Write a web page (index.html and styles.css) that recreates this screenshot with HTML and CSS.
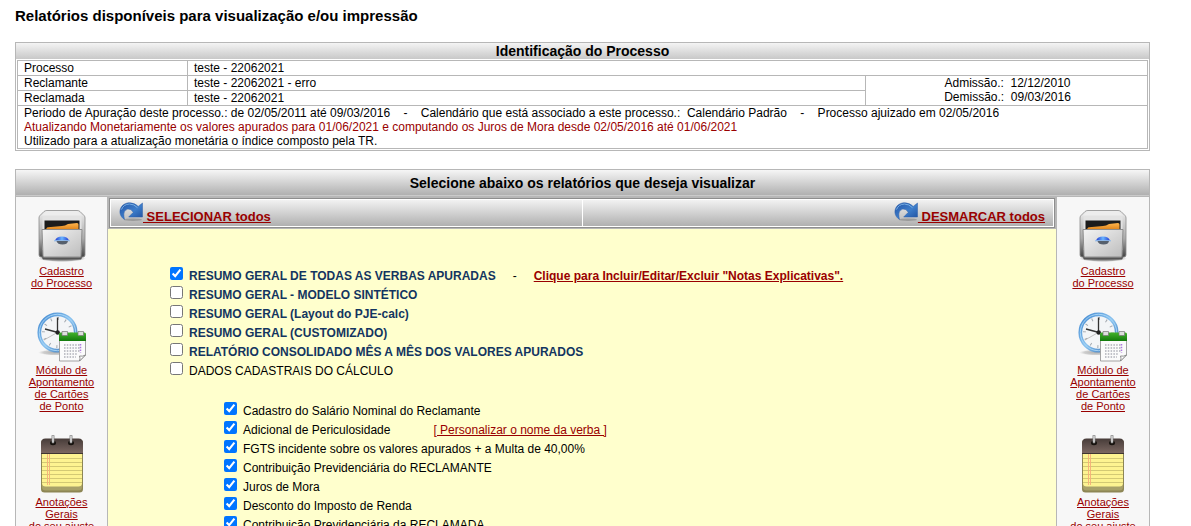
FILE: index.html
```html
<!DOCTYPE html>
<html lang="pt-BR">
<head>
<meta charset="utf-8">
<title>Relatórios</title>
<link rel="stylesheet" href="styles.css">
</head>
<body>
<svg class="defs" width="0" height="0" aria-hidden="true">
  <defs>
    <linearGradient id="steel" x1="0" y1="0" x2="1" y2="1"><stop offset="0" stop-color="#f4f4f4"/><stop offset="1" stop-color="#bcbcbc"/></linearGradient>
    <linearGradient id="side" x1="0" y1="0" x2="0" y2="1"><stop offset="0" stop-color="#eee"/><stop offset=".6" stop-color="#aaa"/><stop offset="1" stop-color="#444"/></linearGradient>
    <linearGradient id="folder" x1="0" y1="0" x2="0" y2="1"><stop offset="0" stop-color="#ffb54d"/><stop offset="1" stop-color="#d97a10"/></linearGradient>
    <linearGradient id="knob" x1="0" y1="0" x2="1" y2="0"><stop offset="0" stop-color="#2038d0"/><stop offset=".5" stop-color="#6ab4ff"/><stop offset="1" stop-color="#2038d0"/></linearGradient>
    <linearGradient id="ring" x1="0" y1="0" x2="1" y2="1"><stop offset="0" stop-color="#3f86cf"/><stop offset=".5" stop-color="#8cc4f0"/><stop offset="1" stop-color="#2a68b0"/></linearGradient>
    <linearGradient id="green" x1="0" y1="0" x2="0" y2="1"><stop offset="0" stop-color="#43b32c"/><stop offset="1" stop-color="#137a0c"/></linearGradient>
    <linearGradient id="leather" x1="0" y1="0" x2="0" y2="1"><stop offset="0" stop-color="#473c39"/><stop offset="1" stop-color="#7a6761"/></linearGradient>
    <linearGradient id="blue" x1="0" y1="0" x2="1" y2="1"><stop offset="0" stop-color="#2456a8"/><stop offset=".55" stop-color="#3d7dca"/><stop offset="1" stop-color="#1f4f9e"/></linearGradient>
    <radialGradient id="shade"><stop offset="0" stop-color="#333" stop-opacity=".75"/><stop offset=".7" stop-color="#555" stop-opacity=".5"/><stop offset="1" stop-color="#999" stop-opacity="0"/></radialGradient>
    <symbol id="cabinet" viewBox="0 0 50 54">
      <ellipse cx="25" cy="49.500" rx="24" ry="3.500" fill="url(#shade)"/>
      <path d="M4 47h42l-2 3.500H6z" fill="#555"/>
      <path d="M10 1.500h30q2 0 3.200 1.200l4 4q.8 1 .8 2.300v37q0 2-2 2H4q-2 0-2-2V9q0-1.300.8-2.300l4-4Q8 1.500 10 1.500z" fill="url(#side)" stroke="#8a8a8a" stroke-width=".8"/>
      <path d="M10 2h30l5.500 4.500h-41z" fill="#ededed"/>
      <path d="M5.500 7h39v34h-39z" fill="#e3e3e3"/>
      <path d="M7.500 11.500h35V23h-35z" fill="#1c1c1c"/>
      <path d="M9 21.500q0-3 2-3.200l14-1.300q3-.2 6-2l9-1q1.500 0 1.500 1.500V22H9z" fill="url(#folder)"/>
      <path d="M5 20.500h40l-1 26q0 1.500-1.500 1.500h-35Q6 48 6 46.500z" fill="url(#steel)" stroke="#8c8c8c"/>
      <path d="M18 31.500q1.500-4 7-4t7 4z" fill="url(#knob)"/>
      <path d="M17 31.300h16v1H17z" fill="#86b5e8"/>
      <path d="M19.500 32h11.500q-.5 3.500-5.500 3.500t-6-3.500z" fill="#56606d"/>
    </symbol>
    <symbol id="clock" viewBox="0 0 50 50">
      <ellipse cx="18" cy="40.500" rx="17" ry="3" fill="url(#shade)" opacity=".5"/>
      <circle cx="20.500" cy="20.500" r="18.200" fill="#f3f5f7" stroke="url(#ring)" stroke-width="3.700"/>
      <circle cx="20.500" cy="20.500" r="18.200" fill="none" stroke="#b5defa" stroke-width=".8"/>
      <circle cx="20.500" cy="20.500" r="14" fill="none" stroke="#a3a9af" stroke-width="3" stroke-dasharray="1 6.330"/>
      <path d="M20.500 20.500V5.500M21 20.500 8 17" stroke="#333" stroke-width="1.300"/>
      <path d="m7 28 15-8.500" stroke="#aaa" stroke-width=".7"/>
      <circle cx="20.700" cy="20.500" r="2.200" fill="#222"/>
      <path d="M22.500 23h26v20l-6 6h-20z" fill="#fbfbfb" stroke="#999" stroke-width=".9"/>
      <path d="M22 29v-7q0-1.500 1.500-1.500h24q1.500 0 1.500 1.500v7z" fill="url(#green)"/>
      <path d="M25 19.500h5.500v4H25zM41 19.500h5.500v4H41z" fill="#dedede" stroke="#777" stroke-width=".7"/>
      <path d="M27 33h16M27 36h16M27 39h16M27 42h13M27 45h12" stroke="#aeb0b8" stroke-width="1.400" stroke-dasharray="1.500 1.300"/>
      <path d="M43.500 32v9" stroke="#ad78e0" stroke-width="1.500" stroke-dasharray="1.500 1.300"/>
      <path d="M42.500 49q1-3 0-5 3 .7 6-1z" fill="#fff" stroke="#777" stroke-width=".8"/>
    </symbol>
    <symbol id="notes" viewBox="0 0 44 58">
      <path d="M1 8q0-3.500 3.500-3.500h35Q43 4.500 43 8v46q0 3.500-3.500 3.500h-35Q1 57.500 1 54z" fill="#8d8655"/>
      <path d="M2 47h40v5q0 3.500-3.500 3.500h-33Q2 55.500 2 52z" fill="#a8a169"/>
      <path d="M2 17h40v31q0 3.500-3.500 3.500h-33Q2 51.500 2 48z" fill="#fdf391"/>
      <path d="M2 23.500h40M2 27.500h40M2 31.500h40M2 35.500h40M2 39.500h40M2 43.500h40M2 47.500h40" stroke="#d3c974"/>
      <path d="M7.500 19v31M9.500 19v31" stroke="#f5ae78" stroke-width=".9"/>
      <path d="M1 18V8q0-4.500 4.500-4.500h33Q43 3.500 43 8v10z" fill="url(#leather)"/>
      <path d="M1 18.500h42" stroke="#3e3532" stroke-width="1.200"/>
      <path d="M10 8a3 2.200 0 1 0 6 0 3 2.200 0 1 0-6 0M28 8a3 2.200 0 1 0 6 0 3 2.200 0 1 0-6 0" fill="#17130f"/>
      <path d="M13 1v6M31 1v6" stroke="#777" stroke-width="2.800" stroke-linecap="round"/>
      <path d="M13 1v6M31 1v6" stroke="#eee" stroke-width="1.300" stroke-linecap="round"/>
    </symbol>
    <symbol id="turn" viewBox="0 0 24 20">
      <ellipse cx="14" cy="17.700" rx="9" ry="1.300" fill="#777" opacity=".5"/>
      <path d="M5.500 17.500C1.500 15 .2 10.800 1.300 7.300 2.600 3 6.500.7 11 .8q4.800.2 8.200 3.600L23.500 1v14H9.700l4.600-4.700Q12 6.500 8.700 7.100 5 8 4.800 12q0 3 .7 5.500z" fill="url(#blue)" stroke="#2d5fa9" stroke-width=".5"/>
      <path d="M2.500 7.500Q4.500 2.300 10.500 2q4.500 0 8 3.700" fill="none" stroke="#79afe3" stroke-width="1"/>
    </symbol>
  </defs>
</svg>

<h1 class="title">Relatórios disponíveis para visualização e/ou impressão</h1>

<section class="process">
  <h2 class="process-head">Identificação do Processo</h2>
  <div class="grid">
    <div class="cell">Processo</div><div class="cell wide">teste - 22062021</div>
    <div class="cell">Reclamante</div><div class="cell">teste - 22062021 - erro</div>
    <div class="cell dates">Admissão.:&nbsp; 12/12/2010<br>Demissão.:&nbsp; 09/03/2016</div>
    <div class="cell">Reclamada</div><div class="cell">teste - 22062021</div>
    <div class="cell full">Periodo de Apuração deste processo.: de 02/05/2011 até 09/03/2016 &nbsp;&nbsp; - &nbsp;&nbsp; Calendário que está associado a este processo.:&nbsp; Calendário Padrão &nbsp;&nbsp; - &nbsp;&nbsp; Processo ajuizado em 02/05/2016<br><span class="red">Atualizando Monetariamente os valores apurados para 01/06/2021 e computando os Juros de Mora desde 02/05/2016 até 01/06/2021</span><br>Utilizado para a atualização monetária o índice composto pela TR.</div>
  </div>
</section>

<section class="reports">
  <h2 class="reports-head">Selecione abaixo os relatórios que deseja visualizar</h2>
  <div class="columns">
    <nav class="side">
      <a class="tool"><svg class="i-cabinet"><use href="#cabinet"/></svg><span>Cadastro<br>do Processo</span></a>
      <a class="tool"><svg class="i-clock"><use href="#clock"/></svg><span>Módulo de<br>Apontamento<br>de Cartões<br>de Ponto</span></a>
      <a class="tool"><svg class="i-notes"><use href="#notes"/></svg><span>Anotações<br>Gerais<br>do seu ajuste</span></a>
    </nav>
    <main class="main">
      <div class="bar">
        <div class="bar-cell"><a class="bar-link"><svg class="i-turn"><use href="#turn"/></svg><span>&nbsp;SELECIONAR todos</span></a></div>
        <div class="bar-cell end"><a class="bar-link"><svg class="i-turn"><use href="#turn"/></svg><span>&nbsp;DESMARCAR todos</span></a></div>
      </div>
      <div class="list">
        <label class="row strong"><input type="checkbox" checked><span>RESUMO GERAL DE TODAS AS VERBAS APURADAS</span><i class="dash">-</i><a class="link">Clique para Incluir/Editar/Excluir "Notas Explicativas".</a></label>
        <label class="row strong"><input type="checkbox"><span>RESUMO GERAL - MODELO SINTÉTICO</span></label>
        <label class="row strong"><input type="checkbox"><span>RESUMO GERAL (Layout do PJE-calc)</span></label>
        <label class="row strong"><input type="checkbox"><span>RESUMO GERAL (CUSTOMIZADO)</span></label>
        <label class="row strong"><input type="checkbox"><span>RELATÓRIO CONSOLIDADO MÊS A MÊS DOS VALORES APURADOS</span></label>
        <label class="row"><input type="checkbox"><span>DADOS CADASTRAIS DO CÁLCULO</span></label>
        <div class="sub">
          <label class="row"><input type="checkbox" checked><span>Cadastro do Salário Nominal do Reclamante</span></label>
          <label class="row"><input type="checkbox" checked><span>Adicional de Periculosidade</span><a class="link rename">[ Personalizar o nome da verba ]</a></label>
          <label class="row"><input type="checkbox" checked><span>FGTS incidente sobre os valores apurados + a Multa de 40,00%</span></label>
          <label class="row"><input type="checkbox" checked><span>Contribuição Previdenciária do RECLAMANTE</span></label>
          <label class="row"><input type="checkbox" checked><span>Juros de Mora</span></label>
          <label class="row"><input type="checkbox" checked><span>Desconto do Imposto de Renda</span></label>
          <label class="row"><input type="checkbox" checked><span>Contribuição Previdenciária da RECLAMADA</span></label>
        </div>
      </div>
    </main>
    <nav class="side">
      <a class="tool"><svg class="i-cabinet"><use href="#cabinet"/></svg><span>Cadastro<br>do Processo</span></a>
      <a class="tool"><svg class="i-clock"><use href="#clock"/></svg><span>Módulo de<br>Apontamento<br>de Cartões<br>de Ponto</span></a>
      <a class="tool"><svg class="i-notes"><use href="#notes"/></svg><span>Anotações<br>Gerais<br>do seu ajuste</span></a>
    </nav>
  </div>
</section>
</body>
</html>
```
FILE: styles.css
```css
* { box-sizing: border-box; }
html, body { height: 526px; overflow: hidden; }
body {
  margin: 0;
  padding: 7px 41px 0 15px;
  background: #fff;
  color: #000;
  font: 12px/14px "Liberation Sans", Arial, sans-serif;
}
.defs { display: block; }
.title { margin: 0 0 18px; font-size: 15px; line-height: 17px; }

.process { width: 1135px; border: 1px solid #b7b7b7; padding-bottom: 1px; }
.process-head {
  height: 16px;
  margin: 0 0 1px;
  font-size: 14px;
  line-height: 16px;
  text-align: center;
  background: linear-gradient(#f4f4f4, #c8c8c8);
}
.grid {
  display: grid;
  grid-template-columns: 169px 677px 281px;
  grid-template-rows: 14px 14px 14px 42px;
  gap: 1px;
  width: 1131px;
  margin: 0 1px;
  border: 1px solid #b7b7b7;
  background: #b7b7b7;
}
.cell { padding-left: 6px; background: #fff; white-space: nowrap; }
.wide { grid-column: 2 / 4; }
.full { grid-column: 1 / 4; }
.dates { grid-column: 3; grid-row: 2 / 4; padding-left: 2px; text-align: center; }
.red { color: #900; }

.reports { width: 1135px; margin-top: 18px; border: 1px solid #b7b7b7; border-bottom: 0; }
.reports-head {
  height: 27px;
  margin: 0;
  border-bottom: 1px solid #b7b7b7;
  font-size: 14px;
  line-height: 26px;
  text-align: center;
  background: linear-gradient(#f6f6f6, #b0b0b0 25px, #cacaca 25px);
}
.columns { display: grid; grid-template-columns: 91px 950px 92px; height: 360px; }
.side { display: flex; flex-direction: column; gap: 23px; padding-top: 12px; background: #f7f7f7; }
.tool {
  display: flex;
  flex-direction: column;
  align-items: center;
  color: #900;
  font-size: 11px;
  line-height: 12px;
  text-align: center;
  text-decoration: underline;
}
.i-cabinet { width: 50px; height: 54px; margin-bottom: 2px; }
.i-clock { width: 50px; height: 50px; margin-bottom: 2px; }
.i-notes { width: 44px; height: 58px; margin-bottom: 3px; }

.main { border: 1px solid #b7b7b7; border-width: 0 1px; background: #ffffcd; }
.bar {
  display: flex;
  gap: 1px;
  height: 32px;
  padding: 1px;
  border: 1px solid #b7b7b7;
  border-bottom-color: #b7b7b7;
  background: #fff;
  box-shadow: inset 0 0 0 1px #8e8e8e;
}
.bar { padding: 2px; }
.bar-cell {
  display: flex;
  flex: 1;
  padding: 1px 8px 0;
  background: linear-gradient(#f2f2f2, #b0b0b0);
}
.end { justify-content: flex-end; }
.bar-link {
  display: flex;
  align-items: flex-start;
  color: #900;
  font-size: 13px;
  font-weight: bold;
  line-height: 15px;
  text-decoration: underline;
}
.bar-link span { margin-top: 8px; }
.i-turn { width: 24px; height: 20px; margin-top: 1px; }

.list { padding: 37px 0 0 62px; }
.row { display: flex; align-items: flex-start; height: 19px; white-space: nowrap; }
.row input { width: 13px; height: 13px; margin: 1px 6px 0 0; }
.row span, .dash, .link { padding-top: 3px; }
.strong span { color: #133560; font-weight: bold; }
.dash { width: 38px; padding-left: 17px; font-style: normal; }
.link { color: #900; text-decoration: underline; }
.strong .link { font-weight: bold; }
.rename { margin-left: 43px; }
.sub { padding: 21px 0 0 54px; }
```
